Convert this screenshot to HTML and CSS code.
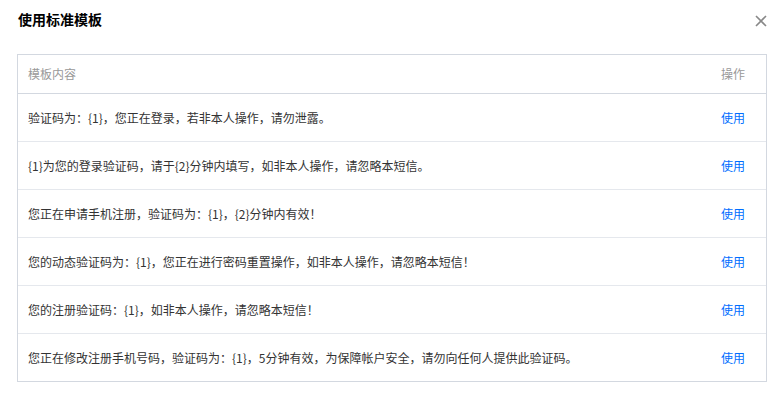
FILE: index.html
```html
<!DOCTYPE html>
<html lang="zh-CN">
<head>
  <meta charset="UTF-8" />
  <title>使用标准模板</title>
  <link rel="stylesheet" href="styles.css">
</head>
<body>

<div class="dialog">
  <div class="dialog-head">
    <h3>使用标准模板</h3>
    <span class="close">
      <svg width="12" height="12" viewBox="0 0 12 12"><path d="M1 1L11 11M11 1L1 11" stroke="#888" stroke-width="1.6" fill="none"/></svg>
    </span>
  </div>

  <div class="tpl-table">
    <div class="row head">
      <div class="cell content">模板内容</div>
      <div class="cell action">操作</div>
    </div>
    <div class="row">
      <div class="cell content">验证码为：{1}，您正在登录，若非本人操作，请勿泄露。</div>
      <div class="cell action"><a href="#">使用</a></div>
    </div>
    <div class="row">
      <div class="cell content">{1}为您的登录验证码，请于{2}分钟内填写，如非本人操作，请忽略本短信。</div>
      <div class="cell action"><a href="#">使用</a></div>
    </div>
    <div class="row">
      <div class="cell content">您正在申请手机注册，验证码为：{1}，{2}分钟内有效！</div>
      <div class="cell action"><a href="#">使用</a></div>
    </div>
    <div class="row">
      <div class="cell content">您的动态验证码为：{1}，您正在进行密码重置操作，如非本人操作，请忽略本短信！</div>
      <div class="cell action"><a href="#">使用</a></div>
    </div>
    <div class="row">
      <div class="cell content">您的注册验证码：{1}，如非本人操作，请忽略本短信！</div>
      <div class="cell action"><a href="#">使用</a></div>
    </div>
    <div class="row">
      <div class="cell content">您正在修改注册手机号码，验证码为：{1}，5分钟有效，为保障帐户安全，请勿向任何人提供此验证码。</div>
      <div class="cell action"><a href="#">使用</a></div>
    </div>
  </div>
</div>

</body>
</html>
```

FILE: styles.css
```css
body { margin: 0; background: #fff; font-family: "Noto Sans CJK SC", "Noto Sans", sans-serif; color: #333; font-size: 12px; }
.dialog { padding: 0 10px 0 17px; }
.dialog-head { display: flex; justify-content: space-between; height: 54px; }
.dialog-head h3 { margin: 9px 0 0 1px; font-size: 14px; line-height: 20px; font-weight: bold; color: #000; }
.close { margin-top: 15px; width: 12px; height: 12px; display: flex; }
.tpl-table { border: 1px solid #d3d8e0; }
.row { display: flex; align-items: center; height: 47px; border-bottom: 1px solid #e5e8ed; }
.row:last-child { border-bottom: none; }
.row.head { height: 38px; border-bottom-color: #d3d8e0; color: #999; }
.cell { line-height: 18px; }
.content { flex: 1; padding-left: 10px; }
.action { width: 60px; padding-right: 21px; text-align: right; }
.action a { color: #006eff; text-decoration: none; }
```
